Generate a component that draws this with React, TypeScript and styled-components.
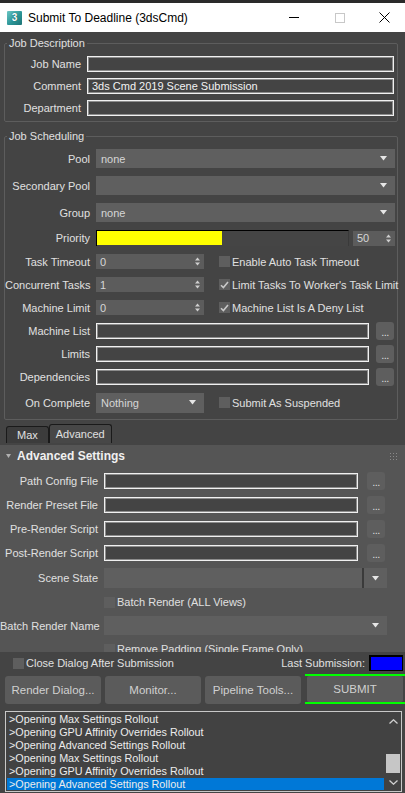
import React from 'react';
import styled, { createGlobalStyle } from 'styled-components';

const FONT = `"Liberation Sans", Arial, sans-serif`;

const GlobalStyle = createGlobalStyle`
  html, body { margin: 0; padding: 0; background: #444444; }
  body { font-family: ${FONT}; font-size: 11px; color: #e0e0e0; }
  * { box-sizing: border-box; }
`;

const Window = styled.div`
  width: 405px; height: 793px; display: flex; flex-direction: column;
  background: #444444; overflow: hidden;
`;
const TopStrip = styled.div`height: 3px; background: #2a2a2a; flex: none;`;
const TitleBar = styled.div`
  height: 29px; flex: none; background: #ffffff; display: flex; align-items: center;
  padding-left: 7px; color: #000; font-size: 12px;
`;
const AppIcon = styled.div`
  width: 15px; height: 14px; margin-right: 6px; border-radius: 1px;
  background: linear-gradient(135deg, #6cc6c4 0%, #2b9597 55%, #1d7375 100%);
  color: #fff; font-weight: bold; font-size: 10px; line-height: 14px; text-align: center;
  text-shadow: 0 0 1px #0b4a4c;
`;
const TitleText = styled.div`white-space: nowrap;`;
const Caption = styled.div`margin-left: auto; display: flex; height: 100%;`;
const CaptionBtn = styled.div<{ $w: number }>`
  width: ${p => p.$w}px; display: flex; align-items: center; justify-content: center;
`;

const Body = styled.div`flex: none; padding-top: 4px;`;
const Group = styled.fieldset<{ $mt: number; $pt: number }>`
  margin: ${p => p.$mt}px 7px 0 4px; padding: ${p => p.$pt}px 1px 2px 0;
  border: 1px solid #5d5d5d; border-radius: 2px; min-width: 0;
`;
const Legend = styled.legend`
  margin-left: 2px; padding: 0 2px; font-size: 11px; line-height: 14px; color: #e0e0e0;
`;
const Row = styled.div<{ $h: number }>`
  height: ${p => p.$h}px; display: flex; align-items: center;
`;
const Label = styled.div<{ $w: number }>`
  width: ${p => p.$w}px; flex: none; margin-right: 6px; text-align: right; white-space: nowrap;
  color: #e0e0e0;
`;
const TextBox = styled.div<{ $w?: number }>`
  ${p => (p.$w ? `width: ${p.$w}px; flex: none;` : 'flex: 1;')}
  height: 16px; border: 1px solid #f0f0f0; box-shadow: inset 0 0 0 1px #8c8c8c;
  background: #444; color: #f2f2f2; padding-left: 4px; line-height: 14px; white-space: nowrap;
  margin-right: 2px;
`;
const Combo = styled.div<{ $w?: number; $h?: number }>`
  ${p => (p.$w ? `width: ${p.$w}px; flex: none;` : 'flex: 1;')}
  height: ${p => p.$h ?? 19}px; background: #5f5f5f; display: flex; align-items: center;
  padding: 0 8px 0 5px; color: #d6d6d6; margin-right: 1px;
`;
const ComboText = styled.div`flex: 1; white-space: nowrap;`;
const ComboSep = styled.div`width: 2px; align-self: stretch; background: #3a3a3a; margin-right: 8px;`;
const Spinner = styled.div<{ $w: number }>`
  width: ${p => p.$w}px; flex: none; height: 15px; background: #5c5c5c; display: flex;
  align-items: center; padding: 0 4px 0 4px; color: #d6d6d6;
`;
const SpinText = styled.div`flex: 1;`;
const PrioritySlider = styled.div`
  width: 253px; flex: none; height: 16px; background: #454545;
  border-top: 1px solid #000; border-left: 1px solid #000; border-right: 1px solid #3a3a3a;
  padding: 0 0 1px 0; display: flex;
`;
const PriorityFill = styled.div`height: 100%; background: #ffff00;`;
const Browse = styled.div<{ $ml: number }>`
  width: 18px; height: 18px; flex: none; margin-left: ${p => p.$ml}px; border-radius: 3px;
  background: #5e5e5e; color: #dcdcdc; font-size: 11px; line-height: 20px; text-align: center;
  letter-spacing: -0.5px;
`;
const CheckWrap = styled.div<{ $ml: number }>`
  display: flex; align-items: center; margin-left: ${p => p.$ml}px; white-space: nowrap;
`;
const CheckBox = styled.div`
  width: 11px; height: 11px; background: #5e5e5e; margin-right: 2px; flex: none;
  display: flex; align-items: center; justify-content: center;
`;
const CheckLabel = styled.div`color: #e0e0e0;`;

const TabBar = styled.div`
  height: 19px; margin-top: 4px; padding-left: 6px; display: flex; align-items: flex-end; flex: none;
`;
const Tab = styled.div<{ $active?: boolean }>`
  height: ${p => (p.$active ? 19 : 17)}px; padding: 0 ${p => (p.$active ? 6 : 10)}px;
  border: 1px solid #1a1a1a; border-bottom: none; border-radius: 3px 3px 0 0;
  background: ${p => (p.$active ? '#474747' : '#3c3c3c')};
  color: #e0e0e0; line-height: ${p => (p.$active ? 18 : 16)}px; font-size: 11px;
`;
const Rollout = styled.div`
  margin-top: 2px; height: 207px; flex: none; background: #555555; overflow: hidden;
`;
const RollHeader = styled.div`
  height: 22px; display: flex; align-items: center; padding-left: 6px; padding-right: 8px;
  font-weight: bold; font-size: 12px; color: #f0f0f0;
`;
const RollTitle = styled.div`flex: 1; margin-left: 6px;`;
const RollBody = styled.div`padding-top: 2px;`;

const Options = styled.div`
  height: 22px; flex: none; display: flex; align-items: center; padding: 0 2px 0 13px;
`;
const LastLabel = styled.div`margin-left: auto; margin-right: 4px; color: #e0e0e0;`;
const LastBox = styled.div`
  width: 34px; height: 16px; background: #0000ff; border-style: solid; border-color: #000;
  border-width: 2px 1px 1px 2px;
`;
const ButtonRow = styled.div`
  height: 30px; flex: none; display: flex; align-items: flex-end; padding-left: 5px; gap: 4px;
`;
const Button = styled.div`
  width: 96px; height: 28px; background: #5b5b5b; border-radius: 3px; color: #d0d0d0;
  display: flex; align-items: center; justify-content: center; font-size: 11.5px; white-space: nowrap;
`;
const SubmitFrame = styled.div`
  width: 100px; height: 30px; border-top: 2px solid #00ff00; border-bottom: 2px solid #00ff00;
  padding-left: 2px; display: flex;
`;
const SubmitButton = styled(Button)`height: 26px; border-radius: 2px;`;

const LogBox = styled.div`
  margin: 7px 0 0 5px; width: 397px; height: 81px; border: 1px solid #c8c8c8; background: #424242;
  display: flex; padding: 1px 0 1px 1px; flex: none;
`;
const LogList = styled.div`flex: 1; overflow: hidden;`;
const LogLine = styled.div<{ $sel?: boolean }>`
  height: 13px; line-height: 13px; padding-left: 2px; white-space: nowrap; font-size: 10.8px;
  color: #ececec; background: ${p => (p.$sel ? '#0078d7' : 'transparent')};
`;
const ScrollBar = styled.div`
  width: 16px; flex: none; display: flex; flex-direction: column; align-items: center;
  margin-left: 1px;
`;
const ScrollArrow = styled.div`height: 16px; display: flex; align-items: center; justify-content: center;`;
const ScrollTrack = styled.div`flex: 1; width: 100%; padding: 0 1px; display: flex; flex-direction: column;`;
const ScrollThumb = styled.div`width: 100%; height: 19px; background: #c6c6c6; margin-top: 25px;`;

const DownArrow = () => (
  <svg width="7" height="5" viewBox="0 0 7 5"><polygon points="0,0 7,0 3.5,4.5" fill="#e6e6e6" /></svg>
);
const SpinArrows = () => (
  <svg width="5" height="9" viewBox="0 0 5 9">
    <polygon points="0,3.5 5,3.5 2.5,0.5" fill="#cfcfcf" />
    <polygon points="0,5.5 5,5.5 2.5,8.5" fill="#cfcfcf" />
  </svg>
);
const Check = () => (
  <svg width="9" height="8" viewBox="0 0 9 8">
    <path d="M1 4.2 L3.4 6.6 L8 1" fill="none" stroke="#c8c8c8" strokeWidth="1.6" />
  </svg>
);

const CB = ({ checked, label, ml = 0 }: { checked?: boolean; label: string; ml?: number }) => (
  <CheckWrap $ml={ml}>
    <CheckBox>{checked && <Check />}</CheckBox>
    <CheckLabel>{label}</CheckLabel>
  </CheckWrap>
);

const SpinBox = ({ w, value }: { w: number; value: string }) => (
  <Spinner $w={w}>
    <SpinText>{value}</SpinText>
    <SpinArrows />
  </Spinner>
);

const Dropdown = ({ value, w, h, sep }: { value: string; w?: number; h?: number; sep?: boolean }) => (
  <Combo $w={w} $h={h}>
    <ComboText>{value}</ComboText>
    {sep && <ComboSep />}
    <DownArrow />
  </Combo>
);

const logLines = [
  '>Opening Max Settings Rollout',
  '>Opening GPU Affinity Overrides Rollout',
  '>Opening Advanced Settings Rollout',
  '>Opening Max Settings Rollout',
  '>Opening GPU Affinity Overrides Rollout',
  '>Opening Advanced Settings Rollout',
];

export default function App() {
  return (
    <Window>
      <GlobalStyle />
      <TopStrip />
      <TitleBar>
        <AppIcon>3</AppIcon>
        <TitleText>Submit To Deadline (3dsCmd)</TitleText>
        <Caption>
          <CaptionBtn $w={46}>
            <svg width="10" height="1" viewBox="0 0 10 1"><rect width="10" height="1" fill="#000" /></svg>
          </CaptionBtn>
          <CaptionBtn $w={46}>
            <svg width="10" height="10" viewBox="0 0 10 10"><rect x="0.5" y="0.5" width="9" height="9" fill="none" stroke="#c8c8c8" /></svg>
          </CaptionBtn>
          <CaptionBtn $w={42}>
            <svg width="11" height="11" viewBox="0 0 11 11">
              <path d="M0.5 0.5 L10.5 10.5 M10.5 0.5 L0.5 10.5" stroke="#000" strokeWidth="1" />
            </svg>
          </CaptionBtn>
        </Caption>
      </TitleBar>

      <Body>
        <Group $mt={0} $pt={3}>
          <Legend>Job Description</Legend>
          <Row $h={22}><Label $w={76}>Job Name</Label><TextBox /></Row>
          <Row $h={22}><Label $w={76}>Comment</Label><TextBox>3ds Cmd 2019 Scene Submission</TextBox></Row>
          <Row $h={22}><Label $w={76}>Department</Label><TextBox /></Row>
        </Group>

        <Group $mt={7} $pt={2}>
          <Legend>Job Scheduling</Legend>
          <Row $h={27}><Label $w={85}>Pool</Label><Dropdown value="none" /></Row>
          <Row $h={27}><Label $w={85}>Secondary Pool</Label><Dropdown value="" /></Row>
          <Row $h={27}><Label $w={85}>Group</Label><Dropdown value="none" /></Row>
          <Row $h={24}>
            <Label $w={85}>Priority</Label>
            <PrioritySlider><PriorityFill style={{ width: `${(50 / 100) * 250}px` }} /></PrioritySlider>
            <div style={{ width: 4 }} />
            <SpinBox w={42} value="50" />
          </Row>
          <Row $h={23}>
            <Label $w={85}>Task Timeout</Label><SpinBox w={108} value="0" />
            <CB ml={15} label="Enable Auto Task Timeout" />
          </Row>
          <Row $h={23}>
            <Label $w={85}>Concurrent Tasks</Label><SpinBox w={108} value="1" />
            <CB ml={15} checked label="Limit Tasks To Worker's Task Limit" />
          </Row>
          <Row $h={23}>
            <Label $w={85}>Machine Limit</Label><SpinBox w={108} value="0" />
            <CB ml={15} checked label="Machine List Is A Deny List" />
          </Row>
          <Row $h={23}><Label $w={85}>Machine List</Label><TextBox $w={273} /><Browse $ml={5}>...</Browse></Row>
          <Row $h={23}><Label $w={85}>Limits</Label><TextBox $w={273} /><Browse $ml={5}>...</Browse></Row>
          <Row $h={23}><Label $w={85}>Dependencies</Label><TextBox $w={273} /><Browse $ml={5}>...</Browse></Row>
          <Row $h={29}>
            <Label $w={85}>On Complete</Label><Dropdown value="Nothing" w={108} h={20} />
            <CB ml={14} label="Submit As Suspended" />
          </Row>
        </Group>
      </Body>

      <TabBar>
        <Tab>Max</Tab>
        <Tab $active>Advanced</Tab>
      </TabBar>

      <Rollout>
        <RollHeader>
          <svg width="5" height="4" viewBox="0 0 5 4"><polygon points="0,0 5,0 2.5,4" fill="#b0b0b0" /></svg>
          <RollTitle>Advanced Settings</RollTitle>
          <svg width="7" height="7" viewBox="0 0 7 7" fill="#8a8a8a">
            <rect x="0" y="0" width="1" height="1" /><rect x="3" y="0" width="1" height="1" /><rect x="6" y="0" width="1" height="1" />
            <rect x="0" y="3" width="1" height="1" /><rect x="3" y="3" width="1" height="1" /><rect x="6" y="3" width="1" height="1" />
            <rect x="0" y="6" width="1" height="1" /><rect x="3" y="6" width="1" height="1" /><rect x="6" y="6" width="1" height="1" />
          </svg>
        </RollHeader>
        <RollBody>
          <Row $h={24}><Label $w={98}>Path Config File</Label><TextBox $w={254} /><Browse $ml={7}>...</Browse></Row>
          <Row $h={24}><Label $w={98}>Render Preset File</Label><TextBox $w={254} /><Browse $ml={7}>...</Browse></Row>
          <Row $h={24}><Label $w={98}>Pre-Render Script</Label><TextBox $w={254} /><Browse $ml={7}>...</Browse></Row>
          <Row $h={24}><Label $w={98}>Post-Render Script</Label><TextBox $w={254} /><Browse $ml={7}>...</Browse></Row>
          <Row $h={26}><Label $w={98}>Scene State</Label><Dropdown value="" w={283} h={20} sep /></Row>
          <Row $h={22}><CB ml={104} label="Batch Render (ALL Views)" /></Row>
          <Row $h={25}><Label $w={98}>Batch Render Name</Label><Dropdown value="" w={283} h={19} /></Row>
          <Row $h={22}><CB ml={104} label="Remove Padding (Single Frame Only)" /></Row>
        </RollBody>
      </Rollout>

      <Options>
        <CB label="Close Dialog After Submission" />
        <LastLabel>Last Submission:</LastLabel>
        <LastBox />
      </Options>
      <ButtonRow>
        <Button>Render Dialog...</Button>
        <Button>Monitor...</Button>
        <Button>Pipeline Tools...</Button>
        <SubmitFrame><SubmitButton>SUBMIT</SubmitButton></SubmitFrame>
      </ButtonRow>

      <LogBox>
        <LogList>
          {logLines.map((l, i) => (
            <LogLine key={i} $sel={i === logLines.length - 1}>{l}</LogLine>
          ))}
        </LogList>
        <ScrollBar>
          <ScrollArrow>
            <svg width="9" height="5" viewBox="0 0 9 5"><path d="M0.5 4.5 L4.5 0.8 L8.5 4.5" fill="none" stroke="#d0d0d0" strokeWidth="1.3" /></svg>
          </ScrollArrow>
          <ScrollTrack><ScrollThumb /></ScrollTrack>
          <ScrollArrow>
            <svg width="9" height="5" viewBox="0 0 9 5"><path d="M0.5 0.5 L4.5 4.2 L8.5 0.5" fill="none" stroke="#d0d0d0" strokeWidth="1.3" /></svg>
          </ScrollArrow>
        </ScrollBar>
      </LogBox>
    </Window>
  );
}
